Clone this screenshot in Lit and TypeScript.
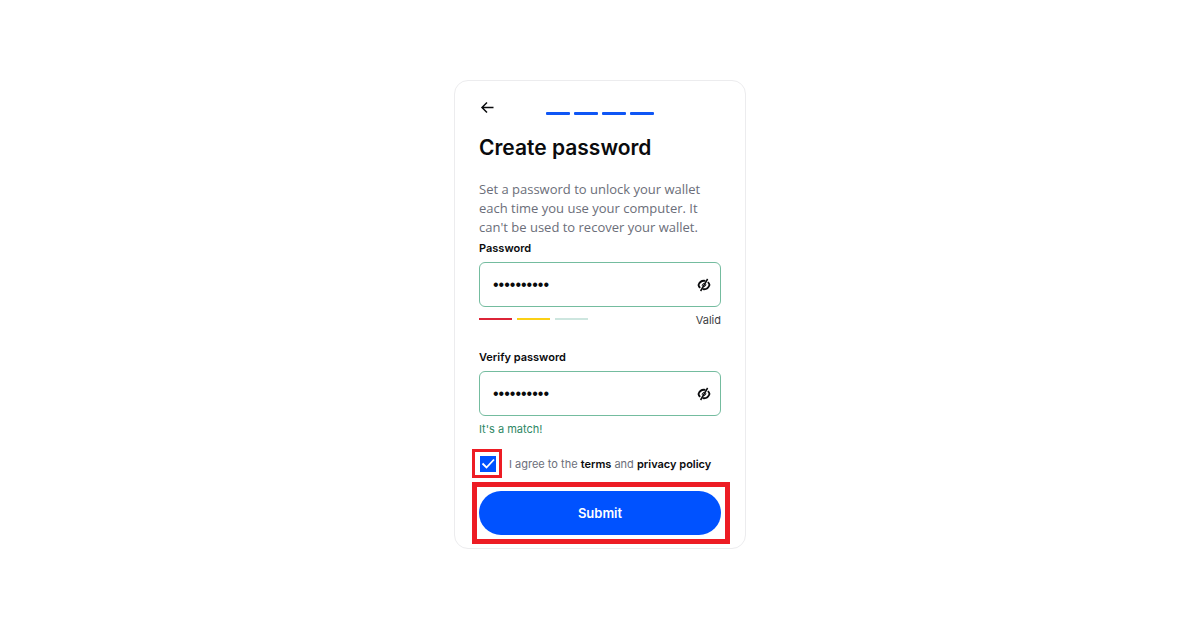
import { LitElement, html, css, svg } from "lit";
import { customElement, property } from "lit/decorators.js";

@customElement("password-field")
class PasswordField extends LitElement {
  @property() label = "";
  @property() value = "";

  static styles = css`
    :host { display: block; }
    .label {
      display: block;
      margin-bottom: 3px;
      font-size: 11px;
      line-height: 22px;
      font-weight: 600;
      color: #0a0b0d;
    }
    .box {
      display: flex;
      align-items: center;
      box-sizing: border-box;
      height: 45px;
      padding: 0 9px 0 13px;
      border: 1px solid #74bc9f;
      border-radius: 6px;
      background: #fff;
    }
    .input {
      flex: 1;
      min-width: 0;
      padding: 0;
      border: 0;
      outline: 0;
      background: none;
      color: #0a0b0d;
      font-family: "Liberation Sans", sans-serif;
      font-size: 16px;
    }
    .toggle {
      display: flex;
      padding: 0;
      border: 0;
      background: none;
      color: #0a0b0d;
    }
  `;

  render() {
    return html`
      <label class="label" for="field">${this.label}</label>
      <div class="box">
        <input class="input" id="field" type="password" .value=${this.value} />
        <button class="toggle" type="button" aria-label="Show password">
          <svg width="14" height="14" viewBox="0 0 14 14" fill="none" stroke="currentColor" stroke-width="1.8">
            ${svg`
              <path d="M8.400 2.900C4.800 2.300 2.400 4.400 1.500 7c.2 1.200.8 2.200 1.700 2.900" />
              <path d="M5.600 11.100c3.600.6 6-1.500 6.900-4.100-.2-1.200-.8-2.200-1.700-2.900" />
              <path d="M7.200 5.300C5.700 5.500 5 6.700 5.200 7.800M6.800 8.700c1.500-.2 2.200-1.400 2-2.500" stroke-width="1" />
              <path d="M10.600 1 3.600 13" stroke-width="1.500" />
            `}
          </svg>
        </button>
      </div>
    `;
  }
}

@customElement("app-root")
class AppRoot extends LitElement {
  static styles = css`
    :host {
      display: grid;
      place-items: center;
      min-height: 100vh;
      background: #fff;
      font-family: Inter, sans-serif;
      color: #0a0b0d;
    }
    .card {
      box-sizing: border-box;
      width: 292px;
      padding: 19px 24px 4px;
      border: 1px solid #ececee;
      border-radius: 14px;
      background: #fff;
    }
    .header {
      display: grid;
      grid-template-columns: 1fr auto 1fr;
      height: 15px;
    }
    .back {
      display: flex;
      justify-self: start;
      padding: 0 1px;
      border: 0;
      background: none;
      color: #0a0b0d;
    }
    .steps {
      display: flex;
      align-items: end;
      gap: 4px;
    }
    .step {
      width: 24px;
      height: 3px;
      border-radius: 1px;
      background: #0f56f5;
    }
    .title {
      margin: 19px 0 18px;
      font-size: 21px;
      line-height: 28px;
      font-weight: 600;
    }
    .intro {
      margin: 0;
      font-family: "Open Sans", sans-serif;
      font-size: 13px;
      line-height: 19px;
      color: #6b6e79;
    }
    .meta {
      display: flex;
      justify-content: space-between;
      margin: 5px 0 18px;
      font-size: 11px;
      line-height: 16px;
      color: #3c3e44;
    }
    .meter {
      display: flex;
      gap: 5px;
      padding-top: 6px;
    }
    .level {
      width: 33px;
      height: 2px;
    }
    .weak { background: #dc2437; }
    .fair { background: #fbd015; }
    .strong { background: #cde6df; }
    .match {
      margin: 5px 0 12px;
      font-size: 11px;
      line-height: 16px;
      color: #2e8765;
    }
    .agree {
      display: flex;
      align-items: center;
      gap: 7px;
      margin-left: -7px;
      font-size: 11px;
      color: #6b6e79;
      white-space: nowrap;
    }
    .tick-frame {
      display: flex;
      padding: 4px 3px 3px 5px;
      border: 3px solid #ed1c24;
    }
    .tick {
      appearance: none;
      width: 16px;
      height: 16px;
      margin: 0;
      background: #0052ff;
      grid-area: 1 / 1;
    }
    .tick-stack { display: grid; }
    .tick-mark {
      grid-area: 1 / 1;
      pointer-events: none;
      z-index: 1;
    }
    .link {
      color: #0a0b0d;
      font-weight: 600;
      text-decoration: none;
    }
    .submit-frame {
      margin: 4px -9px 0 -7px;
      padding: 4px 4px 4px 2px;
      border: 5px solid #ed1c24;
    }
    .submit {
      display: block;
      width: 100%;
      height: 44px;
      border: 0;
      border-radius: 22px;
      background: #0052ff;
      color: #fff;
      font-family: Inter, sans-serif;
      font-size: 13px;
      font-weight: 600;
    }
  `;

  render() {
    return html`
      <form class="card">
        <div class="header">
          <button class="back" type="button" aria-label="Back">
            <svg width="14" height="14" viewBox="0 0 14 14" fill="none" stroke="currentColor" stroke-width="1.5">
              <path d="M13.500 7.500H2M7 2.500 2 7.500l5 5" />
            </svg>
          </button>
          <div class="steps">
            ${[1, 2, 3, 4].map(() => html`<span class="step"></span>`)}
          </div>
        </div>
        <h1 class="title">Create password</h1>
        <p class="intro">
          Set a password to unlock your wallet each time you use your computer. It can't be used to recover your wallet.
        </p>
        <password-field label="Password" value="wallet2023"></password-field>
        <div class="meta">
          <div class="meter">
            <span class="level weak"></span>
            <span class="level fair"></span>
            <span class="level strong"></span>
          </div>
          <span>Valid</span>
        </div>
        <password-field label="Verify password" value="wallet2023"></password-field>
        <p class="match">It's a match!</p>
        <div class="agree">
          <div class="tick-frame">
            <div class="tick-stack">
              <input class="tick" id="agree" type="checkbox" checked />
              <svg class="tick-mark" width="16" height="16" viewBox="0 0 16 16" fill="none" stroke="#fff" stroke-width="1.800">
                <path d="m2.500 7.500 4 4 7.500-8" />
              </svg>
            </div>
          </div>
          <label for="agree">I agree to the <a class="link" href="#terms">terms</a> and <a class="link" href="#privacy">privacy policy</a></label>
        </div>
        <div class="submit-frame">
          <button class="submit" type="button">Submit</button>
        </div>
      </form>
    `;
  }
}
